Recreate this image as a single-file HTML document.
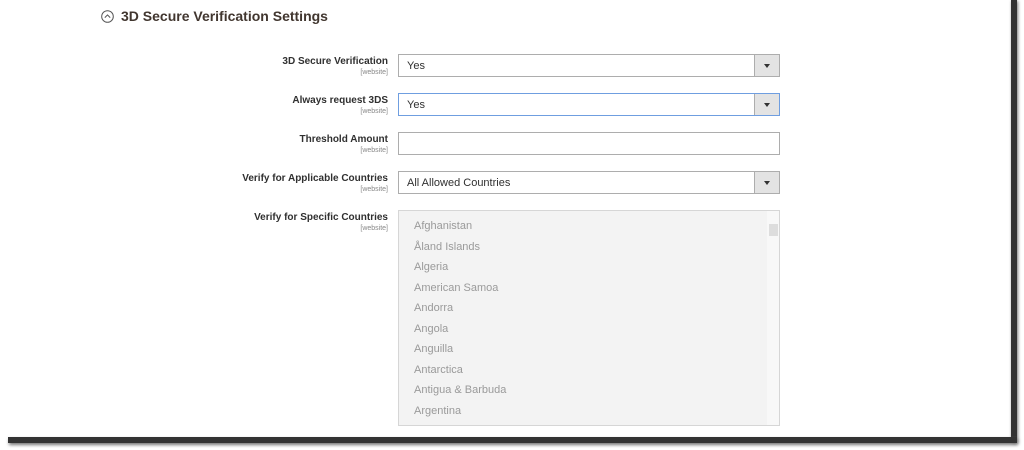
<!DOCTYPE html>
<html><head><style>
body{margin:0;width:1024px;height:450px;background:#fff;position:relative;overflow:hidden;font-family:"Liberation Sans",sans-serif;color:#303030}
.sr{position:absolute;left:1011px;top:0;width:6px;height:442px;background:#333;box-shadow:1px 1px 3px #777}
.sb{position:absolute;left:8px;top:437px;width:1009px;height:6px;background:#333;box-shadow:1px 2px 3px #777}
.h{position:absolute;left:121px;top:8px;font-size:14px;font-weight:bold;color:#41362f}
.ic{position:absolute;left:101px;top:10px}
.lab{position:absolute;right:636px;text-align:right;font-size:10px;font-weight:bold;color:#303030;line-height:12px}
.lab small{display:block;font-size:7px;font-weight:normal;color:#888;line-height:9px}
.f{position:absolute;left:398px;width:380px;height:21px;border:1px solid #adadad;background:#fff;font-size:11px;line-height:22px;box-sizing:content-box}
.f span{padding-left:8px}
.ar{position:absolute;right:0;top:0;width:24px;height:21px;background:#e3e3e3;border-left:1px solid #adadad}
.ar:after{content:"";position:absolute;left:9px;top:9px;border:3.5px solid transparent;border-top:4px solid #333}
.lb{position:absolute;left:398px;top:210px;width:380px;height:214px;border:1px solid #d6d6d6;background:#f3f3f3}
.it{position:absolute;left:15px;font-size:11px;color:#9a9a9a}
.scr{position:absolute;right:0;top:0;width:12px;height:214px;background:#f8f8f8}
.th{position:absolute;right:1px;top:13px;width:9px;height:12px;background:#ddd}
</style></head><body>
<svg class="ic" width="13" height="13" viewBox="0 0 13 13"><circle cx="6.5" cy="6.5" r="5.8" fill="none" stroke="#555" stroke-width="1"/><path d="M3.8 7.6 L6.5 4.9 L9.2 7.6" fill="none" stroke="#555" stroke-width="1"/></svg>
<div class="h">3D Secure Verification Settings</div>
<div class="lab" style="top:56px">3D Secure Verification<small>[website]</small></div>
<div class="lab" style="top:95px">Always request 3DS<small>[website]</small></div>
<div class="lab" style="top:134px">Threshold Amount<small>[website]</small></div>
<div class="lab" style="top:173px">Verify for Applicable Countries<small>[website]</small></div>
<div class="lab" style="top:212px">Verify for Specific Countries<small>[website]</small></div>
<div class="f" style="top:54px"><span>Yes</span><div class="ar"></div></div>
<div class="f" style="top:93px;border-color:#6f9ee0"><span>Yes</span><div class="ar"></div></div>
<div class="f" style="top:132px"></div>
<div class="f" style="top:171px"><span>All Allowed Countries</span><div class="ar"></div></div>
<div class="lb">
<div class="it" style="top:9px">Afghanistan</div><div class="it" style="top:30px">Åland Islands</div><div class="it" style="top:50px">Algeria</div><div class="it" style="top:71px">American Samoa</div><div class="it" style="top:91px">Andorra</div><div class="it" style="top:112px">Angola</div><div class="it" style="top:132px">Anguilla</div><div class="it" style="top:153px">Antarctica</div><div class="it" style="top:173px">Antigua &amp; Barbuda</div><div class="it" style="top:194px">Argentina</div>
<div class="scr"><div class="th"></div></div>
</div>
<div class="sr"></div><div class="sb"></div>
</body></html>
